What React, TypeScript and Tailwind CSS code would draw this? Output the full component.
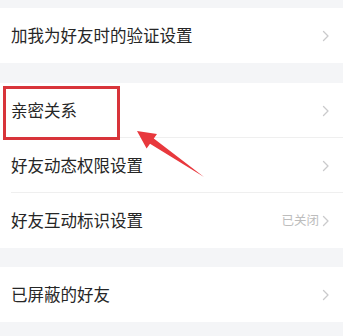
import React from "react";

const font = { fontFamily: '"Noto Sans CJK SC", "Noto Sans", sans-serif' };

function Chevron() {
  return (
    <svg width="8" height="12" viewBox="0 0 8 12" className="shrink-0">
      <path d="M1.5 1.5 L6 6 L1.5 10.5" fill="none" stroke="#cacacc" strokeWidth="1.3" strokeLinecap="round" strokeLinejoin="round" />
    </svg>
  );
}

function Row({ label, value, divider }: { label: string; value?: string; divider?: boolean }) {
  return (
    <div className="relative h-[55px] bg-white flex items-center pl-[11px] pr-[13px]">
      <span className="flex-1 text-[16.5px] text-[#262626] leading-none">{label}</span>
      {value && <span className="text-[12.5px] text-[#bdbdbd] mr-[3px] leading-none">{value}</span>}
      <Chevron />
      {divider && <div className="absolute left-[11px] right-0 bottom-0 h-px bg-[#efefef]" />}
    </div>
  );
}

export default function App() {
  return (
    <div className="relative w-[343px] h-[336px] overflow-hidden bg-[#f4f5f7]" style={font}>
      <div className="flex flex-col pt-[8px]">
        <Row label="加我为好友时的验证设置" />
        <div className="h-[20px]" />
        <Row label="亲密关系" divider />
        <Row label="好友动态权限设置" divider />
        <Row label="好友互动标识设置" value="已关闭" />
        <div className="h-[19px]" />
        <Row label="已屏蔽的好友" />
      </div>
      <div className="absolute left-[3px] top-[86px] w-[117px] h-[54px] border-[3px] border-[#d8343a]" />
      <svg className="absolute inset-0 pointer-events-none" width="343" height="336" viewBox="0 0 343 336">
        <polygon
          points="137,131 157,134 153.8,138.6 204,177 150,143.8 146.6,148.5"
          fill="#e8383d"
        />
      </svg>
    </div>
  );
}
